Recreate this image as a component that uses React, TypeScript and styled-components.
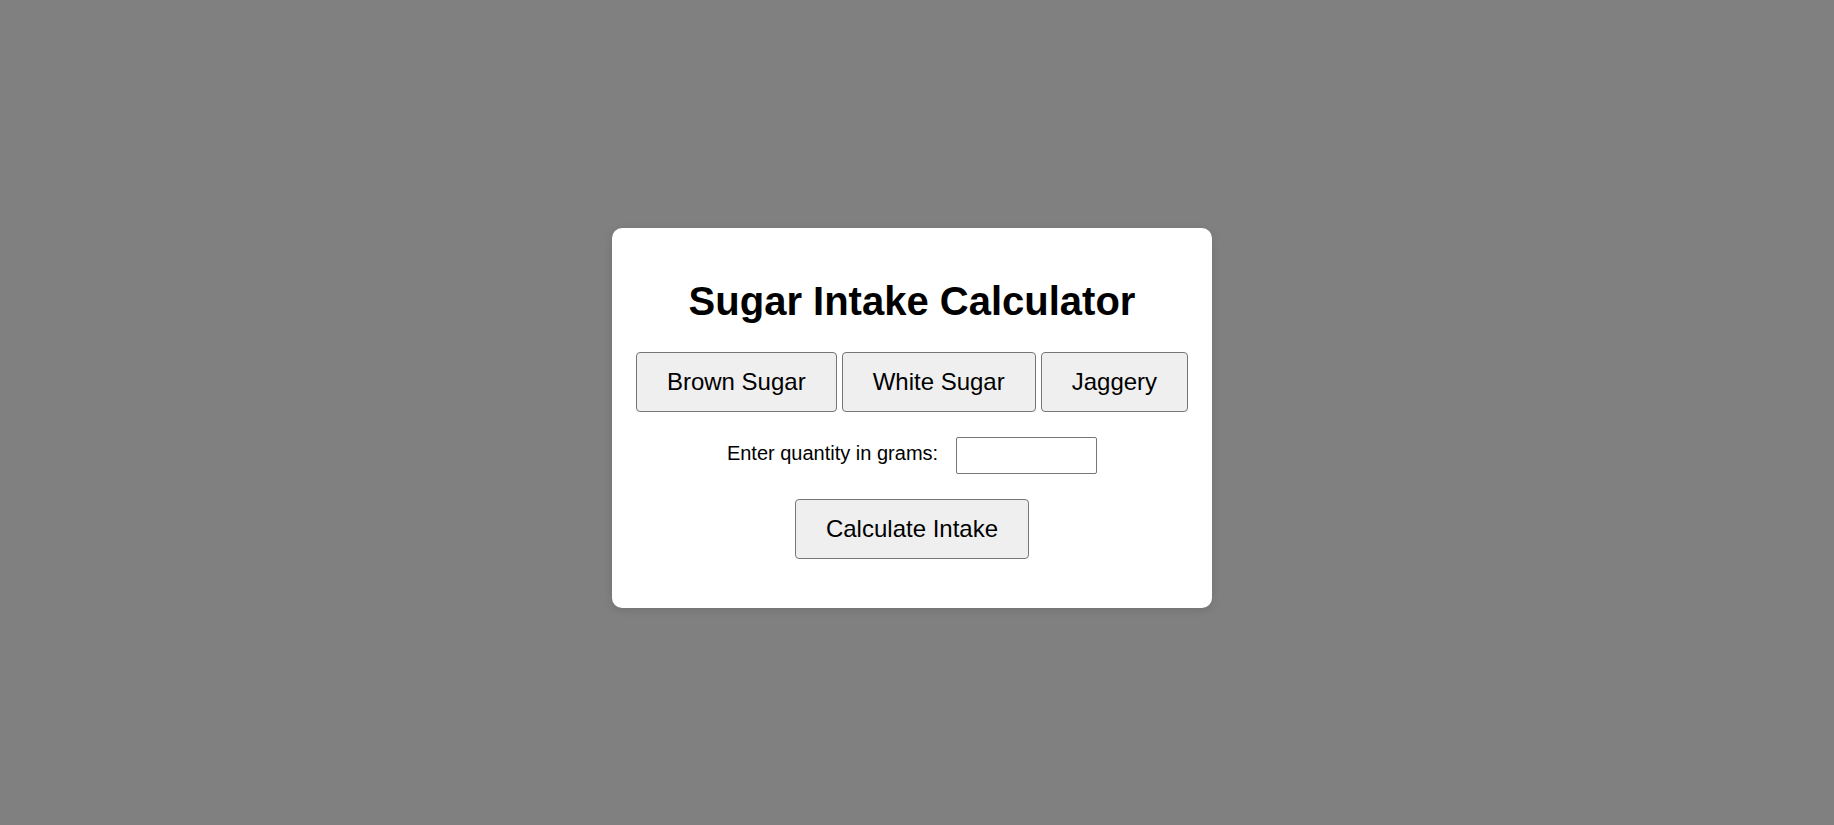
import React, { useState } from "react";
import styled, { createGlobalStyle } from "styled-components";

const GlobalStyle = createGlobalStyle`
  html, body {
    margin: 0;
    padding: 0;
    background: #808080;
    font-family: "Liberation Sans", Arial, sans-serif;
  }
`;

const Overlay = styled.div`
  min-height: 100vh;
  box-sizing: border-box;
  padding: 11px 10px 0 0;
  display: flex;
  align-items: center;
  justify-content: center;
  background: #808080;
`;

const Card = styled.div`
  width: 600px;
  height: 380px;
  box-sizing: border-box;
  background: #ffffff;
  border-radius: 10px;
  box-shadow: 0 2px 10px rgba(0, 0, 0, 0.12);
  display: flex;
  flex-direction: column;
  align-items: center;
  padding-top: 50px;
`;

const Title = styled.h1`
  margin: 0;
  font-size: 40px;
  line-height: 46px;
  font-weight: bold;
  color: #000;
`;

const ButtonRow = styled.div`
  display: flex;
  gap: 5px;
  margin-top: 28px;
`;

const Button = styled.button`
  font-family: "Liberation Sans", Arial, sans-serif;
  font-size: 24px;
  line-height: 28px;
  padding: 15px 30px;
  border: 1px solid #767676;
  border-radius: 4px;
  background: #efefef;
  color: #000;
  cursor: pointer;
`;

const InputRow = styled.div`
  display: flex;
  align-items: center;
  gap: 18px;
  margin-top: 25px;
`;

const Label = styled.label`
  font-size: 20px;
  line-height: 23px;
  padding-bottom: 5px;
  color: #000;
`;

const Input = styled.input`
  width: 141px;
  height: 37px;
  box-sizing: border-box;
  border: 1px solid #767676;
  border-radius: 2px;
  font-family: "Liberation Sans", Arial, sans-serif;
  font-size: 18px;
  padding: 4px 6px;
  margin: 0;
`;

const CalcButton = styled(Button)`
  margin-top: 25px;
`;

export default function App() {
  const [qty, setQty] = useState("");
  return (
    <>
      <GlobalStyle />
      <Overlay>
        <Card>
          <Title>Sugar Intake Calculator</Title>
          <ButtonRow>
            <Button>Brown Sugar</Button>
            <Button>White Sugar</Button>
            <Button>Jaggery</Button>
          </ButtonRow>
          <InputRow>
            <Label htmlFor="qty">Enter quantity in grams:</Label>
            <Input id="qty" type="text" value={qty} onChange={(e) => setQty(e.target.value)} />
          </InputRow>
          <CalcButton>Calculate Intake</CalcButton>
        </Card>
      </Overlay>
    </>
  );
}
